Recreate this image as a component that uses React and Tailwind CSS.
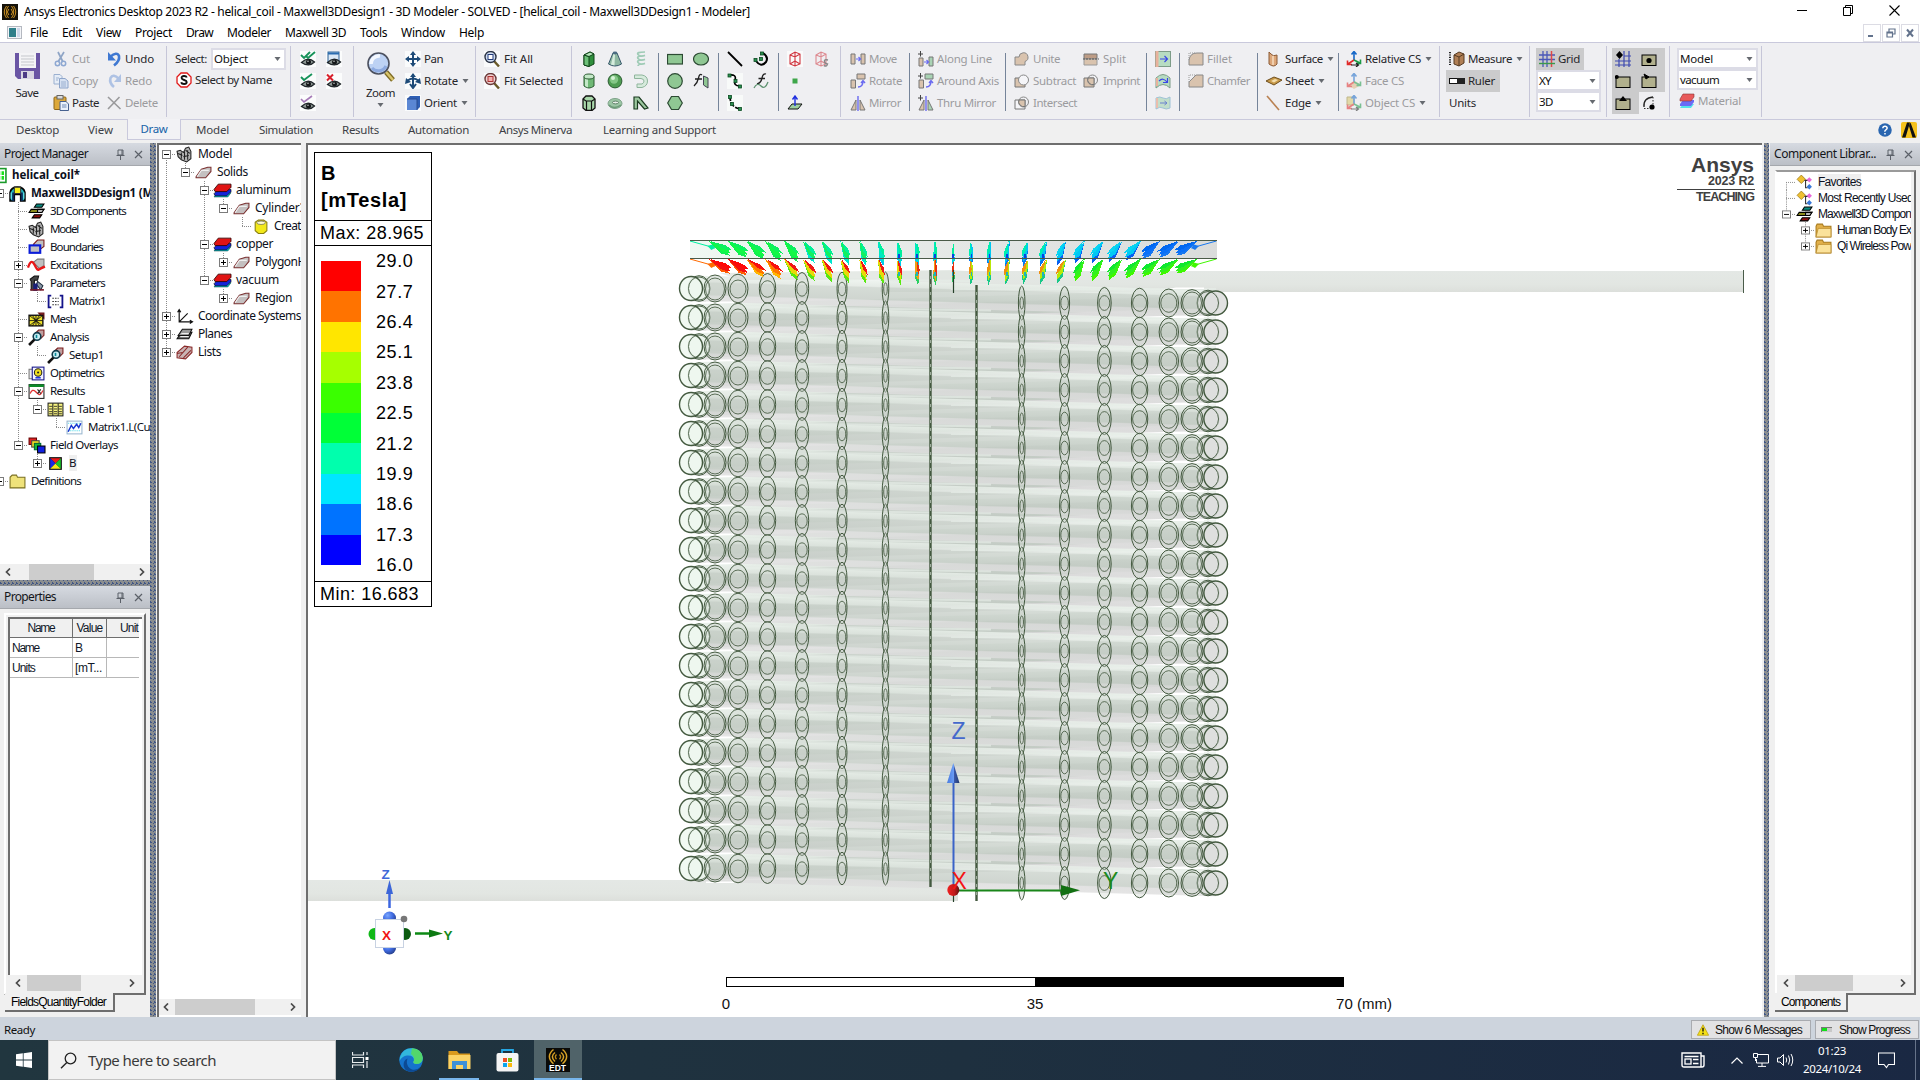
import React, { useLayoutEffect, useRef } from "react";

/* Text run whose tracking is tuned so that it fills a known width. */
function T({ w, c = "", children }) {
  const ref = useRef(null);
  useLayoutEffect(() => {
    const el = ref.current;
    if (!w || !el) return;
    el.style.letterSpacing = "0px";
    const n = el.textContent.length;
    el.style.letterSpacing = (w - el.getBoundingClientRect().width) / n + "px";
  }, [w]);
  return (
    <span ref={ref} className={"inline-block shrink-0 whitespace-pre " + c}>
      {children}
    </span>
  );
}

const I = ({ c = "h-4 w-4", o, children, v = "0 0 16 16" }) => (
  <svg viewBox={v} className={"block shrink-0 " + c} opacity={o} fill="none">
    {children}
  </svg>
);

/* ---------- ribbon icons ---------- */
const EyeShape = () => (
  <g>
    <path d="M1.500 11.500Q8 5 14.500 11Q9 16.500 1.500 11.500Z" fill="#8e9894" stroke="#20262a" strokeWidth="1.300" />
    <circle cx="8.500" cy="11" r="2.500" fill="#15181a" />
    <circle cx="8" cy="10.300" r="0.700" fill="#dfe5e2" />
  </g>
);
const Eye = ({ mark }) => (
  <I>
    <rect width="16" height="16" fill="#fbfcfc" />
    {mark === "win" && (
      <g>
        <rect x="2" y="1" width="11" height="11" fill="#dbe8f5" stroke="#2b5f94" />
        <path d="M2 2.500H13" stroke="#2b6cb0" strokeWidth="2" />
      </g>
    )}
    <EyeShape />
    {mark === "x" && <path d="M1 1.500L7 7.500M7 1.500L1 7.500" stroke="#d8202c" strokeWidth="2" />}
    {mark === "g" && <path d="M1 4L4 7L12 1" stroke="#17935a" strokeWidth="1.900" />}
    {mark === "gg" && <path d="M1 4L4 7L10 1M6 5L8 7L15 1" stroke="#17935a" strokeWidth="1.900" />}
    {mark === "p" && <path d="M1 4L4 7L12 1" stroke="#a67bb8" strokeWidth="1.700" />}
  </I>
);
const SaveIcon = () => (
  <I c="h-[28px] w-[27px]" v="0 0 27 28">
    <path d="M1 1H26V27H4L1 24Z" fill="#6a55a4" />
    <rect x="5" y="1" width="17" height="15" fill="#f4f4f6" />
    <path d="M7 4H20M7 7H20M7 10H20M7 13H20" stroke="#c5c7cc" />
    <rect x="7" y="19" width="13" height="8" fill="#d9d6e3" />
    <rect x="9" y="20" width="4" height="6" fill="#4c3a86" />
  </I>
);
const Cut = () => (
  <I>
    <path d="M5 1L10 11M11 1L5 11" stroke="#8fa5c6" strokeWidth="1.700" />
    <circle cx="4.500" cy="12.500" r="2.200" stroke="#8ea8d2" strokeWidth="1.500" />
    <circle cx="10.500" cy="12.500" r="2.200" stroke="#8ea8d2" strokeWidth="1.500" />
  </I>
);
const Copy = () => (
  <I>
    <path d="M1 1.500H7L9 3.500V11H1Z" fill="#e6edf7" stroke="#9bb0d0" />
    <path d="M6.500 5.500H12L15 8V15H6.500Z" fill="#d6e1f2" stroke="#8ea5ca" />
    <path d="M8 9H13M8 11H13M8 13H13M3 5H6M3 7H5" stroke="#9bb0d0" />
  </I>
);
const Paste = () => (
  <I>
    <rect x="1" y="2" width="12" height="12.500" rx="1" fill="#dca83a" stroke="#8c6418" />
    <rect x="4" y="0.500" width="6" height="3.500" fill="#dadada" stroke="#666" />
    <path d="M7 6.500H13L15.500 9V15.500H7Z" fill="#eaf1fb" stroke="#46618f" />
    <path d="M9 10H13.500M9 12H13.500" stroke="#6f8ab5" />
  </I>
);
const Undo = () => (
  <I>
    <path d="M3 6Q10 0 12 5Q13 10 7 14.500" stroke="#3f78d2" strokeWidth="2.600" />
    <path d="M1 1V9.500H9Z" fill="#3f78d2" />
  </I>
);
const Redo = () => (
  <I o={0.5}>
    <path d="M12 6Q6 0 3.500 5Q2 10 7 14" stroke="#6f97d8" strokeWidth="2.600" />
    <path d="M14 1V9H7Z" fill="#6f97d8" />
  </I>
);
const Del = () => (
  <I>
    <path d="M1 2L13.500 14M12.500 2L1 14" stroke="#9a9a9c" strokeWidth="1.600" />
  </I>
);
const SName = () => (
  <I>
    <path d="M5 1H11L15 5V11L11 15H5L1 11V5Z" fill="#fff" stroke="#e01818" strokeWidth="1.300" />
    <path d="M10.800 5.500C10 3.400 5.400 3.600 5.600 6C5.800 8.500 10.700 7.500 10.700 10C10.700 12.700 5.800 12.600 5.200 10.200" stroke="#111" strokeWidth="1.900" />
  </I>
);
const ZoomBig = () => (
  <I c="h-[31px] w-[30px]" v="0 0 30 31">
    <path d="M20 20L27 28" stroke="#7d6a22" strokeWidth="5" />
    <path d="M20 20L27 28" stroke="#d8c46c" strokeWidth="2.500" />
    <circle cx="12.500" cy="11.500" r="10.500" fill="#bdd2f4" stroke="#4c5160" strokeWidth="1.600" />
    <path d="M5 12A8 8 0 0 1 14 4" stroke="#f4f8ff" strokeWidth="3.500" />
    <path d="M6 16A8.500 8.500 0 0 0 20 14" stroke="#8daae0" strokeWidth="3" />
  </I>
);
const Pan = () => (
  <I>
    <rect width="16" height="16" fill="#fafbfc" />
    <path d="M8 0L11 4H9V7H12V5L16 8L12 11V9H9V12H11L8 16L5 12H7V9H4V11L0 8L4 5V7H7V4H5Z" fill="#1d4a78" />
  </I>
);
const Rot = () => (
  <I>
    <rect width="16" height="16" fill="#fafbfc" />
    <path d="M8 1V14M5 11L8 15L11 11M2 8Q8 3 14 8" stroke="#1d4a78" strokeWidth="2" />
    <path d="M0 11L1 5L6 9ZM16 11L15 5L10 9ZM5 4L8 0L11 4Z" fill="#1d4a78" />
  </I>
);
const Ori = () => (
  <I>
    <rect width="16" height="16" fill="#fafbfc" />
    <path d="M2 4L5 1H15V12L12 15H2Z" fill="#2f5fb4" />
    <rect x="2" y="4" width="10" height="11" fill="#5b87d4" />
    <path d="M2 4H12V15" stroke="#2a4d90" />
  </I>
);
const Fit = ({ r }) => (
  <I>
    <rect width="16" height="16" fill="#fafbfc" />
    <path d="M10 10L15 15.500" stroke="#6b5a2a" strokeWidth="2.400" />
    <circle cx="6.500" cy="6" r="5.500" fill={r ? "#f0d2d2" : "#cfdcf2"} stroke={r ? "#6a3a3a" : "#2c3446"} strokeWidth="1.400" />
    <rect x="4" y="3.500" width="5" height="5" fill={r ? "#f4b0b0" : "#fff"} stroke={r ? "#a33" : "#223a7a"} />
  </I>
);
const Box3 = () => (
  <I>
    <path d="M3 4L9 1L13 3V13L8 15.500L3 14Z" fill="#2f8f3c" stroke="#0e4217" />
    <path d="M3 4L8 5.500V15.500L3 14Z" fill="#6cc078" stroke="#0e4217" />
    <path d="M3 4L9 1L13 3L8 5.500Z" fill="#b6e6bb" stroke="#0e4217" />
  </I>
);
const Cyl = () => (
  <I>
    <path d="M3 3.500V13Q8 17 13 13V3.500Z" fill="#6fb876" stroke="#2c5c33" />
    <path d="M4 5V13L7 14.500V5Z" fill="#c4e8c8" />
    <ellipse cx="8" cy="3.500" rx="5" ry="2.500" fill="#c4e8c8" stroke="#2c5c33" />
  </I>
);
const Poly = () => (
  <I>
    <path d="M2 4L5 1H11L14 4V13L11 15.500H5L2 13Z" fill="#a9d8ab" stroke="#111" strokeWidth="1.300" />
    <path d="M2 4L5 6H11L14 4M5.500 6V15M10.500 6V15" stroke="#111" strokeWidth="1.200" />
  </I>
);
const Cone = () => (
  <I>
    <path d="M6 2L1.500 13Q8 17 14.500 13L10 2Z" fill="#8fb8a2" stroke="#37586b" />
    <path d="M6.500 3L4 13.500L7.500 14.500L8 3Z" fill="#d6ecdd" />
    <ellipse cx="8" cy="2" rx="2.300" ry="1.400" fill="#4b6b82" />
  </I>
);
const Sphere = () => (
  <I>
    <circle cx="8" cy="8" r="6.900" fill="#4f9c52" stroke="#2c5c33" />
    <circle cx="7" cy="6.500" r="4.200" fill="#84c686" />
    <circle cx="6" cy="5" r="2" fill="#d5f2d6" />
  </I>
);
const Torus = () => (
  <I>
    <ellipse cx="8" cy="8.500" rx="7" ry="5" fill="#9cc6a5" stroke="#7fa38a" />
    <ellipse cx="8.500" cy="7.500" rx="3" ry="1.400" fill="#e8efe9" stroke="#5f8068" />
    <path d="M2 10Q7 15 14 10" stroke="#6d9a78" strokeWidth="1.500" />
  </I>
);
const Helix = () => (
  <I>
    <path d="M12 1Q3 1 5 3.500T12 4.500Q3 5 5 7.500T12 8.500Q3 9 5 11.500T12 12.500Q5 13 5 15" stroke="#9fcbb6" strokeWidth="1.700" />
  </I>
);
const Spiral = () => (
  <I>
    <path d="M1.500 2H9Q14.500 3 14.500 8T9 14.500H4V11H9Q11 10 11 8T8 5.500H1.500Z" fill="#d6eadc" stroke="#8fb59c" />
  </I>
);
const Bend = () => (
  <I>
    <path d="M1 14V2H6L15 13L11.500 14L4.500 6V14Z" fill="#9cc79f" stroke="#1a3a20" strokeWidth="1.200" />
  </I>
);
const G = "#8fc793";
const Line2 = () => <I><path d="M1 1L15 15" stroke="#000" strokeWidth="1.800" /></I>;
const Dots = ({ p }) => p.map(([x, y], i) => <rect key={i} x={x - 1.5} y={y - 1.5} width="3" height="3" fill="#2a8f4f" stroke="#0c4a22" strokeWidth="0.800" />);
const Spl = () => <I><rect width="16" height="16" fill="#f8faf9" /><path d="M2 2Q10 1 8 7T13 13" stroke="#000" strokeWidth="1.600" /><Dots p={[[2.5, 2.5], [8.500, 8], [13, 13.500]]} /></I>;
const Arc1 = () => <I><rect width="16" height="16" fill="#f8faf9" /><path d="M3 1Q3 13 14 14" stroke="#000" strokeWidth="1.800" strokeDasharray="5 1.500" /><Dots p={[[3, 2], [5, 9], [13, 14]]} /></I>;
const Arc2 = () => <I><path d="M10 2Q16 6 13 11Q8 17 3 10" stroke="#000" strokeWidth="2" /><Dots p={[[9, 2.500], [8, 8], [2.500, 9]]} /></I>;
const Fx = () => <I><path d="M13 1Q10 0 9 5T4 11M5.500 5.500H12" stroke="#222" strokeWidth="1.300" /><path d="M1 15Q4 9 8 13T15 9" stroke="#5d9270" strokeWidth="1.300" /></I>;
const Surf = () => <I><path d="M9 2Q6.500 0 5.500 5T1 13M2 6H9" stroke="#222" strokeWidth="1.300" /><path d="M10.500 3L15 5V15L10.500 12Z" fill={G} stroke="#445" /></I>;
const Cage = ({ s }) => (
  <I>
    <rect width="16" height="16" fill="#fafafa" opacity={s ? 0 : 1} />
    <g opacity={s ? 0.55 : 1}>
      <path d="M3 4L8 1L13 3V13L8 15L3 13ZM3 4L8 6L13 3M8 6V15M8 1V10L3 13M8 10L13 13" stroke="#d0353f" strokeWidth="1.100" />
      {s && <path d="M15 9Q11 8 11.500 10.500T14.500 13Q14 16 11 14.500" stroke="#333" strokeWidth="1.400" />}
    </g>
  </I>
);
const Plane = () => <I><path d="M1 14L5 9H15L11 14Z" fill="#9fd0a0" stroke="#111" /><path d="M8 11V2M5.500 4.500L8 1L10.500 4.500" stroke="#1f2fe0" strokeWidth="1.400" /></I>;
const TAN = "#d9c3ae";
const Move = () => <I><path d="M1 3H5V13H1ZM11 3H15V13H11Z" fill={TAN} stroke="#777" /><path d="M6 8H10M8.500 6L10.500 8L8.500 10" stroke="#6a6af0" strokeWidth="1.200" /></I>;
const RotG = ({ plus }) => <I><path d="M1 7H5.500V15H1Z" fill={TAN} stroke="#777" /><path d="M7 1H15V6H7Z" fill={plus ? "#a9d3b4" : TAN} stroke="#777" /><path d="M8 14Q13 14 13 8M11 10L13 7.500L15 10" stroke="#6a6af0" strokeWidth="1.400" />{plus && <path d="M0 3H5M2.500 0V5.500" stroke="#444" />}</I>;
const Mir = ({ plus }) => <I><path d="M1 15L6 5V15Z" fill={TAN} stroke="#777" /><path d="M15 15L10 5V15Z" fill={plus ? "#a9d3b4" : TAN} stroke="#777" /><path d="M8 1V16" stroke="#6a6af0" strokeWidth="1.400" />{plus && <path d="M0 3H5M2.500 0V5.500" stroke="#444" />}</I>;
const Along = () => <I><path d="M1 7H5V15H1Z" fill={TAN} stroke="#777" /><path d="M11 6H15V15H11Z" fill="#a9d3b4" stroke="#777" /><path d="M6 11H10M8.500 9L10.500 11L8.500 13" stroke="#6a6af0" strokeWidth="1.200" /><path d="M0 3H5M2.500 0V5.500" stroke="#444" /></I>;
const Unite = () => <I><path d="M1 14V6H5A4.500 4.500 0 1 1 11 10.500V14Z" fill={TAN} stroke="#888" /></I>;
const Subt = () => <I><path d="M1 14V5H11V14Z" fill={TAN} stroke="#777" /><circle cx="9.500" cy="7" r="5" fill="#f5f5f8" stroke="#888" /></I>;
const Inter = ({ f }) => <I><path d="M1 14V5H11V14Z" fill={f ? TAN : "#f5f5f8"} stroke="#777" /><circle cx="9.500" cy="7" r="5" stroke="#888" /><path d="M5 5H11V11.500A5 5 0 0 1 5 5Z" fill={TAN} stroke="#777" /></I>;
const Split = () => <I><path d="M1 3H14V8H1Z" fill="#bd9c86" stroke="#777" /><path d="M1 8H14V14H1Z" fill="#d9c3ae" stroke="#999" /><path d="M0 8H16" stroke="#555" strokeDasharray="2 1" /></I>;
const SwA = () => <I><rect x="0.500" y="0.500" width="15" height="15" fill="#b7dcc2" stroke="#7d9c88" /><path d="M2 0V16" stroke="#e8b19c" strokeWidth="3" /><path d="M5 8H12M9.500 5L12.500 8L9.500 11" stroke="#3946e8" strokeWidth="1.200" /></I>;
const SwB = () => <I><path d="M1 15V5Q8 -2 15 5V15Q8 8 1 15Z" fill="#b7dcc2" stroke="#7d9c88" /><path d="M4 8Q8 4 12 9M12.500 5V9.500H8" stroke="#3946e8" strokeWidth="1.200" /><path d="M2 5V13" stroke="#e8b19c" strokeWidth="2" /></I>;
const SwC = () => <I o={0.8}><path d="M1 3Q5 1 8 3T15 2V13Q11 15 8 13T1 14Z" fill="#b7dcc2" stroke="#8cb8d0" /><path d="M5 8H12M9.500 6L12 8L9.500 10" stroke="#4a66c8" /><path d="M2 3V13" stroke="#e8b19c" strokeWidth="2" /></I>;
const Fil = ({ k }) => <I><path d={k ? "M1 14V9L8 2H15V14Z" : "M1 14V9Q2 2 9 2H15V14Z"} fill={TAN} stroke="#888" /><path d="M1 9V2H8" stroke="#999" strokeDasharray="1 1" /></I>;
const SurfI = () => <I><path d="M3 1V13Q8 17 11 13V4Q7 6 5 3Z" fill="#dca679" stroke="#8a5a36" /><path d="M7 5V14" stroke="#f0cfae" strokeWidth="2" /></I>;
const SheetI = () => <I><path d="M0 8L8 4L16 7L8 12Z" fill="#c89a4a" stroke="#6d4d1d" /><path d="M5 8L9 6L12 7L8 9.500Z" fill="#f3ddac" /></I>;
const EdgeI = () => <I><path d="M1 1L13 15" stroke="#b98152" strokeWidth="1.600" /></I>;
const Csi = ({ k }) => (
  <I o={k ? 0.55 : 1}>
    {k === "f" && <path d="M2 12L9 8L15 12L8 16Z" fill="#e0b583" />}
    {k === "o" && <path d="M1 2H8V10H1Z" fill="#d8c66a" stroke="#9a8a3a" />}
    <path d="M8 9V1M5.500 3.500L8 0.500L10.500 3.500" stroke="#1668c8" strokeWidth="1.600" />
    <path d="M8 9L2 13M1.500 9.500V13.500H6" stroke="#e02a2a" strokeWidth="1.600" />
    <path d="M8 9L14 12M14.500 8.500V12.500H10.500" stroke="#1c9a46" strokeWidth="1.600" />
    {k !== "f" && <path d="M5 14H12M10 12L12.500 14L10 16" stroke="#222" strokeWidth="1.200" />}
  </I>
);
const Meas = () => <I><path d="M1 1V14" stroke="#222" strokeWidth="2" strokeDasharray="1.200 1.200" /><path d="M5 4L10 1L15 3V12L10 15L5 13Z" fill="#b07f55" stroke="#553a22" /><path d="M5 4L10 6L15 3M10 6V15" stroke="#553a22" /></I>;
const Rul = () => <I><rect x="0.500" y="5.500" width="15" height="5" fill="#fff" stroke="#111" /><rect x="8" y="5" width="8" height="6" fill="#222" /></I>;
const GridI = () => <I><path d="M4 0V16M0 4H16M0 8.500H16" stroke="#4a58b8" strokeWidth="1.300" /><path d="M8 0V16" stroke="#4a58b8" strokeWidth="1.300" /><path d="M12.500 0V16" stroke="#e04848" strokeWidth="1.500" /><path d="M0 12.500H16" stroke="#3a9a4a" strokeWidth="1.400" /></I>;
const Snap = ({ k }) => (
  <I>
    {k === 0 ? (
      <g><path d="M4 8V16M9 0V16M14 0V16M0 10H16M0 14H16M9 5H16" stroke="#3e4ab0" strokeWidth="1.200" /><path d="M4.500 0L8 4L4.500 8L1 4Z" fill="#000" /></g>
    ) : k === 5 ? (
      <g><path d="M11 2Q1 3 2 12" stroke="#222" strokeWidth="1.300" /><path d="M11 2V12M2 13.500H8" stroke="#333" strokeDasharray="1.500 1.500" /><circle cx="10" cy="12" r="2.600" fill="#000" /></g>
    ) : (
      <g>
        <rect x="1" y="4" width="14" height="10.500" fill="#b1b08d" stroke="#000" />
        {k === 1 && <circle cx="8" cy="9.500" r="2.600" fill="#000" />}
        {k === 2 && <circle cx="1.800" cy="4" r="2" fill="#000" />}
        {k === 3 && <path d="M3 1L8 4L5 6Z" fill="#000" stroke="#000" />}
        {k === 4 && <path d="M8 1L12 6H4Z" fill="#000" />}
      </g>
    )}
  </I>
);
const Mat = () => <I><path d="M1 15L4 11H15L12 15Z" fill="#53e2ea" /><path d="M1 11L4 7H15V9L12 13H1Z" fill="#6a6af6" /><path d="M1 6L4 1H15V4L12 8H1Z" fill="#e85a5a" stroke="#833" strokeWidth="0.600" /></I>;

const Caret = ({ c = "" }) => <I v="0 0 7 4" c={"h-[4px] w-[7px] " + c}><path d="M0.500 0H6.500L3.500 4Z" fill="#666a70" /></I>;

/* ---------- ribbon layout ---------- */
const Col = ({ c, children }) => <div className={"flex shrink-0 flex-col " + c}>{children}</div>;
const Row = ({ icon, t, w, dim, arrow, c = "", gap = "w-[19px]" }) => (
  <div className={"flex h-[22px] items-center " + c}>
    {icon && <span className={"shrink-0 " + gap}>{icon}</span>}
    {t && <T w={w} c={dim ? "text-[#9b9b9e]" : "text-[#26262a]"}>{t}</T>}
    {arrow && <Caret c="ml-[4px]" />}
  </div>
);
const Sep = () => <div className="-mt-[2px] h-[71px] w-px shrink-0 bg-[#c6c6d8]" />;
const SepD = () => <div className="mt-[5px] h-[58px] w-px shrink-0 bg-[#75849a]" />;
const Drop = ({ t, w, c }) => (
  <div className={"flex items-center justify-between border-2 border-[#dcdce6] bg-white pl-[1px] pr-[3px] " + c}>
    <T w={w} c="text-[#111]">{t}</T>
    <Caret />
  </div>
);
const Ic = ({ c = "", children }) => <div className={"flex h-[22px] items-center " + c}>{children}</div>;

function Ribbon() {
  return (
    <div className="flex h-[78px] overflow-hidden border-y border-[#c9c9dc] bg-[#efeff2] pt-[5px] text-[11.500px]">
      <Col c="w-[52px] items-center pl-[2px] pt-[4px]">
        <SaveIcon />
        <T w={23} c="mt-[5px] text-[#26262a]">Save</T>
      </Col>
      <Col c="w-[54px] pl-px">
        <Row icon={<Cut />} t="Cut" w={18} dim />
        <Row icon={<Copy />} t="Copy" w={26} dim />
        <Row icon={<Paste />} t="Paste" w={27} />
      </Col>
      <Col c="w-[60px] pl-px">
        <Row icon={<Undo />} t="Undo" w={29} gap="w-[18px]" />
        <Row icon={<Redo />} t="Redo" w={27} dim gap="w-[18px]" />
        <Row icon={<Del />} t="Delete" w={33} dim gap="w-[18px]" />
      </Col>
      <Sep />
      <Col c="w-[123px] pl-[8px]">
        <div className="flex h-[22px] items-center">
          <T w={32} c="mr-[4px] text-[#26262a]">Select:</T>
          <Drop t="Object" w={34} c="h-[22px] w-[75px]" />
        </div>
        <Row icon={<SName />} t="Select by Name" w={77} gap="w-[19px]" c="-mt-px pl-px" />
      </Col>
      <Sep />
      <Col c="w-[62px] pl-[9px]">
        <Ic c="gap-[10px]"><Eye mark="gg" /><Eye mark="win" /></Ic>
        <Ic c="gap-[10px]"><Eye mark="g" /><Eye mark="x" /></Ic>
        <Ic><Eye mark="p" /></Ic>
      </Col>
      <Sep />
      <Col c="w-[51px] items-center pl-[2px] pt-[4px]">
        <ZoomBig />
        <T w={29} c="mt-[2px] text-[#26262a]">Zoom</T>
        <Caret c="mt-[2px]" />
      </Col>
      <Col c="w-[70px]">
        <Row icon={<Pan />} t="Pan" w={19} />
        <Row icon={<Rot />} t="Rotate" w={34} arrow />
        <Row icon={<Ori />} t="Orient" w={33} arrow />
      </Col>
      <Sep />
      <Col c="w-[95px] pl-[8px]">
        <Row icon={<Fit />} t="Fit All" w={29} gap="w-[20px]" />
        <Row icon={<Fit r />} t="Fit Selected" w={59} gap="w-[20px]" />
      </Col>
      <Sep />
      <Col c="w-[86px] pl-[9px]">
        <Ic c="gap-[10px]"><Box3 /><Cone /><Helix /></Ic>
        <Ic c="gap-[10px]"><Cyl /><Sphere /><Spiral /></Ic>
        <Ic c="gap-[10px]"><Poly /><Torus /><Bend /></Ic>
      </Col>
      <SepD />
      <Col c="w-[59px] pl-[8px]">
        <Ic c="gap-[10px]"><I><rect x="0.500" y="3.500" width="15" height="9.500" fill={G} stroke="#2c4a33" strokeWidth="1.200" /></I><I><ellipse cx="8" cy="8" rx="7.500" ry="6" fill={G} stroke="#2c4a33" strokeWidth="1.200" /></I></Ic>
        <Ic c="gap-[10px]"><I><circle cx="8" cy="8" r="7.300" fill={G} stroke="#2c4a33" strokeWidth="1.200" /></I><Surf /></Ic>
        <Ic><I><path d="M4.500 1.500H11.500L15.300 8L11.500 14.500H4.500L0.700 8Z" fill={G} stroke="#2c4a33" strokeWidth="1.200" /></I></Ic>
      </Col>
      <SepD />
      <Col c="w-[59px] pl-[8px]">
        <Ic c="gap-[10px]"><Line2 /><Arc2 /></Ic>
        <Ic c="gap-[10px]"><Spl /><Fx /></Ic>
        <Ic><Arc1 /></Ic>
      </Col>
      <SepD />
      <Col c="w-[61px] pl-[8px]">
        <Ic c="gap-[10px]"><Cage /><Cage s /></Ic>
        <Ic><I><rect x="5.500" y="5.500" width="5" height="5" fill="#3ea64a" /></I></Ic>
        <Ic><Plane /></Ic>
      </Col>
      <Sep />
      <Col c="w-[68px] pl-[9px]">
        <Row icon={<Move />} t="Move" w={28} dim />
        <Row icon={<RotG />} t="Rotate" w={33} dim />
        <Row icon={<Mir />} t="Mirror" w={32} dim />
      </Col>
      <SepD />
      <Col c="w-[95px] pl-[8px]">
        <Row icon={<Along />} t="Along Line" w={55} dim />
        <Row icon={<RotG plus />} t="Around Axis" w={62} dim />
        <Row icon={<Mir plus />} t="Thru Mirror" w={59} dim />
      </Col>
      <SepD />
      <Col c="w-[77px] pl-[8px]">
        <Row icon={<Unite />} t="Unite" w={27} dim />
        <Row icon={<Subt />} t="Subtract" w={43} dim />
        <Row icon={<Inter />} t="Intersect" w={44} dim />
      </Col>
      <Col c="w-[63px]">
        <Row icon={<Split />} t="Split" w={23} dim gap="w-[20px]" />
        <Row icon={<Inter f />} t="Imprint" w={37} dim gap="w-[20px]" />
      </Col>
      <SepD />
      <Col c="w-[32px] items-center">
        <Ic><SwA /></Ic>
        <Ic><SwB /></Ic>
        <Ic><SwC /></Ic>
      </Col>
      <SepD />
      <Col c="w-[77px] pl-[8px]">
        <Row icon={<Fil />} t="Fillet" w={25} dim />
        <Row icon={<Fil k />} t="Chamfer" w={43} dim />
      </Col>
      <SepD />
      <Col c="w-[80px] pl-[8px]">
        <Row icon={<SurfI />} t="Surface" w={38} arrow />
        <Row icon={<SheetI />} t="Sheet" w={29} arrow />
        <Row icon={<EdgeI />} t="Edge" w={26} arrow />
      </Col>
      <SepD />
      <Col c="w-[100px] pl-[7px]">
        <Row icon={<Csi />} t="Relative CS" w={56} arrow />
        <Row icon={<Csi k="f" />} t="Face CS" w={39} dim />
        <Row icon={<Csi k="o" />} t="Object CS" w={50} dim arrow />
      </Col>
      <Sep />
      <Col c="w-[89px] pl-[6px]">
        <Row icon={<Meas />} t="Measure" w={44} arrow c="pl-[3px]" />
        <div className="flex h-[22px] w-[54px] items-center bg-[#cbcbcc] pl-[3px]">
          <span className="w-[19px]"><Rul /></span>
          <T w={27} c="text-[#26262a]">Ruler</T>
        </div>
        <Row t="Units" w={27} c="pl-[3px]" />
      </Col>
      <Sep />
      <Col c="w-[76px] pl-[6px]">
        <div className="flex h-[22px] w-[48px] items-center bg-[#cbcbcc] pl-[3px]">
          <span className="w-[19px]"><GridI /></span>
          <T w={22} c="text-[#26262a]">Grid</T>
        </div>
        <Drop t="XY" w={12} c="h-[21px] w-[65px]" />
        <Drop t="3D" w={14} c="h-[21px] w-[65px]" />
      </Col>
      <Sep />
      <Col c="w-[62px] pl-[5px]">
        <div className="flex h-[22px] w-[53px] items-center gap-[10px] bg-[#cbcbcc] pl-[3px]"><Snap k={0} /><Snap k={1} /></div>
        <div className="flex h-[22px] w-[53px] items-center gap-[10px] bg-[#cbcbcc] pl-[3px]"><Snap k={2} /><Snap k={3} /></div>
        <div className="flex h-[22px] w-[53px] items-center">
          <div className="flex h-[22px] w-[27px] items-center bg-[#cbcbcc] pl-[3px]"><Snap k={4} /></div>
          <span className="pl-[3px]"><Snap k={5} /></span>
        </div>
      </Col>
      <Sep />
      <Col c="w-[91px] pl-[7px]">
        <Drop t="Model" w={33} c="h-[21px] w-[81px]" />
        <Drop t="vacuum" w={39} c="h-[21px] w-[81px]" />
        <Row icon={<Mat />} t="Material" w={43} dim c="pl-[2px]" />
      </Col>
      <Sep />
    </div>
  );
}

/* ---------- panels ---------- */
const SPLIT = "bg-[#8a8d8f] bg-[linear-gradient(45deg,#3f5686_25%,transparent_25%,transparent_75%,#3f5686_75%)] bg-[length:4px_4px]";
const SplitV = ({ c = "w-[6px]" }) => <div className={"shrink-0 " + c + " " + SPLIT} />;

const PanelHead = ({ t, w }) => (
  <div className="flex h-[23px] shrink-0 items-center border-b border-[#a5a8ad] bg-gradient-to-b from-[#d6dae1] to-[#bbbfc6] pl-[4px] pr-[7px] text-[12px] text-[#14161a]">
    <T w={w}>{t}</T>
    <I c="ml-auto h-[11px] w-[9px]" v="0 0 9 11"><path d="M2 1H7V6H2ZM0.500 6.500H8.500M4.500 7V11M6 1V6" stroke="#5b6068" /></I>
    <I c="ml-[9px] h-[9px] w-[9px]" v="0 0 9 9"><path d="M1 1L8 8M8 1L1 8" stroke="#5b6068" strokeWidth="1.200" /></I>
  </div>
);

const HScroll = ({ pre, thumb, c = "" }) => (
  <div className={"flex h-[16px] shrink-0 items-center bg-[#f0f0f0] " + c}>
    <I c={"h-[8px] " + pre} v="0 0 6 8"><path d="M5 0.500L1.500 4L5 7.500" stroke="#4a4a4a" strokeWidth="1.700" /></I>
    <div className={"h-full bg-[#cdcdcd] " + thumb} />
    <I c="ml-auto mr-[5px] h-[8px] w-[6px]" v="0 0 6 8"><path d="M1 0.500L4.500 4L1 7.500" stroke="#4a4a4a" strokeWidth="1.700" /></I>
  </div>
);

/* tree icons, drawn on a 16 x 14 field */
const TI = ({ k }) => {
  const g = {
    proj: <g><rect x="2" y="0.500" width="13" height="13" fill="#fff" stroke="#1a9a2a" strokeWidth="1.500" /><path d="M8.500 3V11M12 3V11" stroke="#18e018" strokeWidth="2.300" strokeDasharray="3.500 1" /></g>,
    max: <g><path d="M1 14V6Q2 1 8 1T15 6V14H11V8H5V14Z" fill="#1fb9c4" stroke="#000" strokeWidth="1.500" /><path d="M5 1H11V7H5Z" fill="#f4ee1a" stroke="#333" /><path d="M4 6V14M12 6V14" stroke="#0a2c5a" strokeWidth="2" /><path d="M2 6V12M14 6V12" stroke="#7af0f4" /></g>,
    comp: <g><path d="M6 3L8 0H15L13 3Z" fill="#0a8a80" stroke="#000" /><path d="M1 8L3 5H9V8ZM9 8V5H15L13 8Z" fill="#8a8a1a" stroke="#000" /><path d="M9 5H15L13 8H9Z" fill="#bbb" stroke="#000" /><path d="M4 13L6 10H13L11 13Z" fill="#8a1010" stroke="#000" /></g>,
    model: <g><path d="M1 4L4 3L7 5L9 1L12 0L14 4V11L10 14L5 12L2 9Z" fill="#b4b4b4" stroke="#222" /><path d="M5 5V11M8 4V12M11 3V12M2 6L6 8M9 3L13 6M7 9L12 8" stroke="#222" /></g>,
    bound: <g><path d="M5 4L9 0H15V6L11 9Z" fill="#c0c0c0" stroke="#7a1a1a" /><rect x="1.500" y="5" width="10" height="7" fill="#c0c0c0" stroke="#0a1cd8" strokeWidth="2" /></g>,
    exc: <g><path d="M5 4L9 1H15V7L11 10Z" fill="#c0c0c0" stroke="#777" /><path d="M0 9Q3 0 6 6T10 11T16 8" stroke="#e81818" strokeWidth="2.200" /></g>,
    par: <g><path d="M2 3L6 0H10L9 4H6V13H3V5Z" fill="#444" stroke="#111" /><path d="M9 5L14 9L12 13L8 8Z" fill="#8a98a8" stroke="#1c2a3a" /><rect x="5" y="7" width="4" height="7" fill="#1a1f7a" /><path d="M2 13H15" stroke="#7a1a2a" strokeWidth="1.500" /></g>,
    mtx: <g><path d="M4 1.500H1.500V12.500H4M12 1.500H14.500V12.500H12" stroke="#14148a" strokeWidth="1.700" /><path d="M5 4H11M5 7H11M5 10H11" stroke="#333" strokeDasharray="1.500 1" /></g>,
    mesh: <g><path d="M10 1H15V6Z" fill="#b02020" stroke="#611" /><rect x="1" y="3" width="13" height="10" fill="#efe22a" stroke="#111" strokeWidth="1.300" /><path d="M1 3L14 13M1 13L14 3M7.500 3V13M1 8H14M4 3L11 13M11 3L4 13" stroke="#111" strokeWidth="0.800" /></g>,
    ana: <g><path d="M7 3L10 0H15V5L12 8Z" fill="#c0a0a0" stroke="#7a1a1a" /><circle cx="8.500" cy="6" r="3.600" fill="#c8eef4" stroke="#0f3a4a" strokeWidth="1.500" /><path d="M6 9L1 14" stroke="#111" strokeWidth="2.500" /><path d="M8 4.500V7.500" stroke="#0a8a9a" strokeWidth="1.500" /></g>,
    opt: <g><path d="M1 3H7V12H1Z" fill="#eee" stroke="#777" /><rect x="4" y="1" width="11" height="12" fill="#f4f4ff" stroke="#14148a" /><circle cx="9.500" cy="6" r="3.500" fill="#f0e020" stroke="#222" /><circle cx="9.500" cy="6" r="1" fill="#222" /><path d="M7 11H12" stroke="#2038e0" strokeWidth="1.500" /></g>,
    res: <g><rect x="1" y="0.500" width="14" height="13" fill="#fff" stroke="#222" /><path d="M1 1.500H15" stroke="#0c8a2a" strokeWidth="2.500" /><path d="M2 9Q4 4 7 7T11 10T14 6" stroke="#e03030" strokeWidth="1.200" /><path d="M9 5L12 9M12 5L9 9" stroke="#222" /></g>,
    tab: <g><rect x="1" y="1" width="14" height="12" fill="#f8f480" stroke="#222" /><path d="M5.500 1V13M10.500 1V13" stroke="#222" /><path d="M2 4H14M2 6.500H14M2 9H14M2 11H14" stroke="#222" strokeDasharray="3 1.500" strokeWidth="0.800" /></g>,
    plot: <g><rect x="1" y="1" width="14" height="12" fill="#fff" stroke="#9ab8d0" /><path d="M2 3H14M2 10H14" stroke="#48d8e8" strokeDasharray="1 1" /><path d="M2 11L5 5L7 8L10 4L12 7L14 3" stroke="#1838d0" strokeWidth="1.400" /></g>,
    fo: <g><rect x="1" y="0" width="7" height="6" fill="#e02020" stroke="#600" /><rect x="3.500" y="2.500" width="7" height="6" fill="#f4e020" stroke="#444" /><rect x="6" y="5" width="6" height="6" fill="#12b83a" stroke="#063" /><rect x="9" y="7.500" width="7" height="6.500" fill="#1020e0" stroke="#000" /></g>,
    b: <g><rect x="2" y="1" width="12" height="12" fill="#111" /><path d="M3 2H13L8 7Z" fill="#f01818" /><path d="M3 2L8 7L3 12Z" fill="#1828e8" /><path d="M3 12L8 7L13 12Z" fill="#f4e818" /><path d="M13 2L8 7L13 12Z" fill="#18c828" /></g>,
    fold: <g><path d="M1 3L3 1H7L8 3H15V13H1Z" fill="#efe27a" stroke="#7a6f20" /></g>,
    fold2: <g><path d="M1 3L2 1H7L8 3H15V13H1Z" fill="#e2b04a" stroke="#a87a1a" /><path d="M1 13L3 5H15V13Z" fill="#fbe29a" stroke="#b8892a" strokeWidth="0.700" /></g>,
    sol: <g><path d="M1 11L6 4L12 2H15V6L10 12H1Z" fill="#c4c0c0" stroke="#7a3030" /><path d="M2 11L6 5L13 5" stroke="#eee" /></g>,
    mat: <g><path d="M0 13L4 9H16L13 13Z" fill="#12d8e8" stroke="#044" strokeWidth="0.600" /><path d="M0 10L4 6H16V8L12 12H1Z" fill="#1424d8" stroke="#000" strokeWidth="0.600" /><path d="M0 6L4 1H16V4L12 8H1Z" fill="#e01414" stroke="#300" strokeWidth="0.800" /></g>,
    cyl: <g><path d="M3 3L6 1H11L14 3V11L11 13.500H6L3 11Z" fill="#f2e81a" stroke="#8a7f10" /><ellipse cx="8.500" cy="3.500" rx="4" ry="1.600" fill="#fffbd0" stroke="#555" strokeWidth="0.600" /></g>,
    cs: <g><path d="M3 1V12H15M1.500 3L3 0.500L4.500 3M13 10.500L15.500 12L13 13.500M3 12L11 4" stroke="#111" strokeWidth="1.100" /></g>,
    pl: <g><path d="M1 11L5 5H15L12 11Z" fill="#555" stroke="#111" /><path d="M2 8L6 2H15L12 8Z" fill="#999" stroke="#111" /><path d="M5 6H12M4 9H12" stroke="#eee" /></g>,
    li: <g><path d="M1 12V7L8 1L15 2V7L9 13Z" fill="#c9b4b4" stroke="#8a2a2a" /><path d="M3 11L11 2M7 12L14 5M1 8L6 7" stroke="#8a2a2a" /></g>,
    fav: <g><path d="M5 0L9 4L5 8L1 4Z" fill="#f0c030" stroke="#9a7818" strokeWidth="0.700" /><path d="M8 5H12M9 5V12H11" stroke="#333" /><path d="M12.500 2L15 4.500L12.500 7L10 4.500Z" fill="#e868d8" /><path d="M12.500 8.500L15 11L12.500 13.500L10 11Z" fill="#3878d8" /></g>,
  };
  return <svg viewBox="0 0 16 14" className="block h-[15px] w-[17px] shrink-0 overflow-visible" fill="none">{g[k]}</svg>;
};

/* guides: one letter per 19px cell. "|" line, " " blank, "t" tee, "l" corner, "+"/"-" toggles */
const Cell = ({ k, last, first }) => (
  <svg viewBox="0 0 19 18" className="block h-full w-[19px] shrink-0" preserveAspectRatio="none" fill="none">
    {(k === "|" || k === "t" || ((k === "+" || k === "-") && !last)) && <path d={first ? "M9.500 9V18" : "M9.500 0V18"} stroke="#8a8a8a" strokeDasharray="1 1" />}
    {(k === "l" || ((k === "+" || k === "-") && last)) && <path d="M9.500 0V9" stroke="#8a8a8a" strokeDasharray="1 1" />}
    {"tl+-".includes(k) && <path d="M9 9.500H19" stroke="#8a8a8a" strokeDasharray="1 1" />}
    {(k === "+" || k === "-") && <rect x="5.500" y="5.500" width="8" height="8" fill="#fff" stroke="#7b7b7b" />}
    {(k === "+" || k === "-") && <path d={k === "+" ? "M7 9.500H12M9.500 7V12" : "M7 9.500H12"} stroke="#000" />}
  </svg>
);
const TreeRow = ({ g, k, t, w, b, last, first, hl, h = "h-[18px]" }) => (
  <div className={"flex items-center " + h}>
    {g.split("").map((x, i) => <Cell key={i} k={x} last={last} first={first} />)}
    <span className="w-[22px] shrink-0"><TI k={k} /></span>
    <T w={w} c={(b ? "font-bold " : "") + (hl ? "bg-[#efefef]" : "")}>{t}</T>
  </div>
);

const PROJECT = [
  { g: "", k: "proj", t: "helical_coil*", w: 68, b: 1 },
  { g: "-", k: "max", t: "Maxwell3DDesign1 (M", w: 122, b: 1 },
  { g: "|t", k: "comp", t: "3D Components", w: 76 },
  { g: "|t", k: "model", t: "Model", w: 28 },
  { g: "|t", k: "bound", t: "Boundaries", w: 53 },
  { g: "|+", k: "exc", t: "Excitations", w: 52 },
  { g: "|-", k: "par", t: "Parameters", w: 55 },
  { g: "||l", k: "mtx", t: "Matrix1", w: 37 },
  { g: "|t", k: "mesh", t: "Mesh", w: 26 },
  { g: "|-", k: "ana", t: "Analysis", w: 39 },
  { g: "||l", k: "ana", t: "Setup1", w: 35 },
  { g: "|t", k: "opt", t: "Optimetrics", w: 54 },
  { g: "|-", k: "res", t: "Results", w: 35 },
  { g: "||-", k: "tab", t: "L Table 1", w: 44, last: 1 },
  { g: "|| l", k: "plot", t: "Matrix1.L(Cu", w: 62 },
  { g: "|-", k: "fo", t: "Field Overlays", w: 68, last: 1 },
  { g: "| +", k: "b", t: "B", w: 8, hl: 1, last: 1 },
  { g: "+", k: "fold", t: "Definitions", w: 50, last: 1 },
];
const MODEL = [
  { g: "-", k: "model", t: "Model", w: 34, first: 1 },
  { g: "|-", k: "sol", t: "Solids", w: 31, last: 1 },
  { g: "| -", k: "mat", t: "aluminum", w: 55 },
  { g: "| |-", k: "sol", t: "Cylinder3", w: 51, last: 1 },
  { g: "| | l", k: "cyl", t: "Creat", w: 27 },
  { g: "| -", k: "mat", t: "copper", w: 37 },
  { g: "| |+", k: "sol", t: "PolygonH", w: 51, last: 1 },
  { g: "| -", k: "mat", t: "vacuum", w: 43, last: 1 },
  { g: "|  +", k: "sol", t: "Region", w: 37, last: 1 },
  { g: "+", k: "cs", t: "Coordinate Systems", w: 103 },
  { g: "+", k: "pl", t: "Planes", w: 34 },
  { g: "+", k: "li", t: "Lists", w: 23, last: 1 },
];
const LIB = [
  { g: "t", k: "fav", t: "Favorites", w: 43, hl: 1, first: 1 },
  { g: "t", k: "fav", t: "Most Recently Used", w: 95 },
  { g: "-", k: "comp", t: "Maxwell3D Compon", w: 93, last: 1 },
  { g: " +", k: "fold2", t: "Human Body Ex", w: 74 },
  { g: " +", k: "fold2", t: "Qi Wireless Pow", w: 74, last: 1 },
];

const FolderTab = ({ t, w, c }) => (
  <div className={"-mt-[2px] flex h-[19px] items-center border-b-2 border-r-2 border-[#6e6e6e] bg-[#f0f0f0] pl-[6px] pt-px font-['Liberation_Sans'] text-[12px] " + c}>
    <T w={w}>{t}</T>
  </div>
);

function LeftPanels() {
  return (
    <div className="flex w-[150px] shrink-0 flex-col overflow-hidden bg-[#f0f0f0]">
      <PanelHead t="Project Manager" w={84} />
      <div className="h-[398px] shrink-0 overflow-hidden bg-white text-[11.500px] text-[#0c1020]">
        <div className="-ml-[10px] w-[260px]">
          {PROJECT.map((r, i) => <TreeRow key={i} {...r} />)}
        </div>
      </div>
      <HScroll pre="ml-[5px] w-[6px]" thumb="ml-[18px] w-[65px]" />
      <div className={"h-[6px] shrink-0 " + SPLIT} />
      <PanelHead t="Properties" w={52} />
      <div className="mx-[4px] mt-[4px] flex h-[382px] shrink-0 flex-col border-2 border-b-[#6e6e6e] border-l-white border-r-[#6e6e6e] border-t-white p-[2px]">
        <div className="flex min-h-0 flex-1 flex-col border-l-2 border-t-2 border-[#6e6e6e] bg-white font-['Liberation_Sans'] text-[12px] text-[#101828]">
          <div className="mr-[3px] grid h-[19px] grid-cols-[63px_34px_1fr] border-b border-[#6e6e6e] bg-[#f0f0f0]">
            <div className="flex items-center justify-center border-r border-[#6e6e6e]"><T w={27}>Name</T></div>
            <div className="flex items-center justify-center border-r border-[#6e6e6e]"><T w={26}>Value</T></div>
            <div className="flex items-center justify-end pr-px"><T w={18}>Unit</T></div>
          </div>
          {[["Name", 27, "B", 7], ["Units", 23, "[mT...", 27]].map((r) => (
            <div key={r[0]} className="mr-[3px] grid h-[20px] grid-cols-[63px_34px_1fr] border-b border-[#b8b8b8]">
              <div className="flex items-center border-r border-[#b8b8b8] pl-[2px]"><T w={r[1]}>{r[0]}</T></div>
              <div className="flex items-center border-r border-[#b8b8b8] pl-[2px]"><T w={r[3]}>{r[2]}</T></div>
              <div />
            </div>
          ))}
        </div>
        <HScroll pre="ml-[7px] w-[6px]" thumb="ml-[6px] w-[54px]" c="mr-[2px]" />
      </div>
      <FolderTab t="FieldsQuantityFolder" w={95} c="ml-[5px] w-[110px]" />
    </div>
  );
}

function ModelTree() {
  return (
    <div className="flex w-[144px] shrink-0 flex-col overflow-hidden border-l-2 border-t-2 border-[#6e6e6e] bg-white">
      <div className="min-h-0 flex-1 overflow-hidden text-[12px] text-[#0c1020]">
        <div className="-ml-[2px] w-[300px]">
          {MODEL.map((r, i) => <TreeRow key={i} {...r} />)}
        </div>
      </div>
      <HScroll pre="ml-[4px] w-[6px]" thumb="ml-[6px] w-[80px]" c="mb-[2px]" />
    </div>
  );
}

function Library() {
  return (
    <div className="flex min-w-0 flex-1 flex-col overflow-hidden bg-[#f0f0f0] pl-px">
      <PanelHead t="Component Librar..." w={102} />
      <div className="ml-[5px] mr-[4px] mt-[4px] flex h-[825px] shrink-0 flex-col border-2 border-b-[#6e6e6e] border-l-white border-r-[#6e6e6e] border-t-[#9a9a9a] pb-[2px] pr-[3px]">
        <div className="min-h-0 flex-1 overflow-hidden bg-white pt-[2px] font-['Liberation_Sans'] text-[12px] text-[#0c1020]">
          <div className="w-[260px]">
            {LIB.map((r, i) => <TreeRow key={i} {...r} h="h-[16px]" />)}
          </div>
        </div>
        <HScroll pre="ml-[6px] w-[6px]" thumb="ml-[6px] w-[58px]" />
      </div>
      <FolderTab t="Components" w={59} c="ml-[5px] w-[73px]" />
    </div>
  );
}

/* ---------- 3D view ---------- */
const PITCH = 29;
const TURNS = Array.from({ length: 21 }, (_, i) => i);
const LEFT_RINGS = [
  [715, 11, 13.5, 9.5, 11], [738, 10, 14.3, 8, 9], [767.5, 8.2, 15, 7, 8.3],
  [802, 6.7, 16, 5.200, 7.2], [842, 5, 16.300, 3.8, 6.8], [885.500, 3.3, 16.500, 1.800, 6.2],
];
const RIGHT_RINGS = [
  [1021.700, 3.3, 17, 1.800, 6], [1064.600, 5, 16.500, 3.800, 6.800], [1104.400, 6.8, 15.6, 5.400, 7.4],
  [1139.600, 8.2, 14.800, 7, 8.300], [1168.800, 9.700, 14, 8, 9.3], [1192, 11, 13.400, 9.500, 11],
];
const WIRE = "#43593f";

const topColours = (i) =>
  i < 1 ? ["#00f0a0"] : i < 6 ? ["#10f050", "#12f845", "#0cf060"] : i < 10 ? ["#00e6d0", "#12f060", "#00f098"] : i < 15 ? ["#00c8f0", "#00e8c0", "#00f09a"] : i < 20 ? ["#0878f0", "#00c8f0", "#00eeb0"] : i < 25 ? ["#0a60f0", "#00c8f4", "#08d4f0"] : ["#1878f0", "#0a70f8", "#0068f0"];
const bottomColours = (i) =>
  i < 1 ? ["#ff6a00"] : i < 3 ? ["#ff5a00", "#f41010", "#ff0808"] : i < 5 ? ["#ffb400", "#ff7400", "#f81010"] : i < 12 ? ["#58e810", "#e8d808", "#f01818"] : i < 15 ? ["#28d060", "#f0a010", "#e83010"] : i < 21 ? ["#18c888", "#b8e808", "#f09010"] : ["#40f800", "#30f020", "#10e830"];

function arrow(x, y, dx, dy, wd) {
  const L = Math.hypot(dx, dy);
  const ux = dx / L, uy = dy / L;
  const h = Math.min(8, L * 0.38);
  const bx = x + dx - ux * h, by = y + dy - uy * h;
  return `M${x} ${y}L${bx - uy * wd} ${by + ux * wd}L${x + dx} ${y + dy}L${bx + uy * wd} ${by - ux * wd}Z`;
}
function Arrows() {
  const out = [];
  for (let i = 0; i < 29; i++) {
    const x = 690 + i * 18.800;
    const u = (14 - i) / 14;
    const s = Math.sign(u), a = Math.abs(u);
    const k = 0.45 + 0.55 * Math.sqrt(a);
    [[241, topColours(i)], [259, bottomColours(i)]].forEach(([y, cols], r) => {
      const edge = a > 0.99;
      const dx = edge ? 25 * s : s * 24 * Math.pow(a, 1.15);
      const dy = edge ? 7 : 26.5 - 14 * Math.pow(a, 2.200);
      if (edge) {
        out.push(<g key={r + "-" + i}><path d={`M${x} ${y}l${dx} ${dy}`} stroke={cols[0]} /><path d={arrow(x + dx * 0.7, y + dy * 0.7, dx * 0.3, dy * 0.3, 3)} fill={cols[0]} /></g>);
      } else {
        out.push(
          <g key={r + "-" + i} shapeRendering="crispEdges">
            <path d={arrow(x, y, dx * 0.95, dy, 3.400 * k)} fill={cols[0]} />
            <path d={arrow(x, y, dx, dy * 0.84, 3.200 * k)} fill={cols[1]} />
            <path d={arrow(x + s, y, dx * 1.020, dy * 0.64, 2.200 * k)} fill={cols[2]} />
            {i > 10 && i < 20 && <path d={`M${x + dx * 0.6} ${y + 13}v4`} stroke={r ? "#20b0c0" : "#0840e0"} strokeWidth="1.500" />}
          </g>
        );
      }
    });
  }
  return out;
}

function Scene() {
  return (
    <svg viewBox="308 145 1454 870" className="block h-[870px] w-[1454px]" fill="none">
      <defs>
        <linearGradient id="tube" x1="0" y1="0" x2="0" y2="1">
          <stop offset="0" stopColor="#eaf1eb" /><stop offset="0.220" stopColor="#e0e7e1" />
          <stop offset="0.270" stopColor="#cbd3cc" /><stop offset="0.720" stopColor="#c3cbc4" />
          <stop offset="0.770" stopColor="#dbdbdb" /><stop offset="1" stopColor="#dedede" />
        </linearGradient>
        <linearGradient id="plate" x1="0" y1="0" x2="1" y2="0">
          <stop offset="0" stopColor="#f0f8f2" /><stop offset="0.450" stopColor="#e6e9e7" /><stop offset="1" stopColor="#dadcdb" />
        </linearGradient>
        <linearGradient id="bar" x1="0" y1="0" x2="0" y2="1">
          <stop offset="0" stopColor="#e4e8e5" /><stop offset="0.650" stopColor="#e2e6e2" /><stop offset="1" stopColor="#dcdfdb" />
        </linearGradient>
        <linearGradient id="zc" x1="0" y1="0" x2="1" y2="0"><stop offset="0" stopColor="#4a7ce0" /><stop offset="0.550" stopColor="#6a9cf4" /><stop offset="0.600" stopColor="#3a58a8" /><stop offset="1" stopColor="#243a70" /></linearGradient>
        <linearGradient id="rc" x1="0" y1="0" x2="1" y2="0"><stop offset="0" stopColor="#f02020" /><stop offset="0.600" stopColor="#c01a1a" /><stop offset="1" stopColor="#601010" /></linearGradient>
        <radialGradient id="bb" cx="0.350" cy="0.300" r="0.800"><stop offset="0" stopColor="#7aa6ff" /><stop offset="0.500" stopColor="#3f6ae0" /><stop offset="1" stopColor="#22387c" /></radialGradient>
      </defs>
      <rect x="880" y="271" width="863" height="21" fill="url(#bar)" />
      <path d="M1743.500 270V293" stroke="#4a5c4a" />
      <rect x="308" y="880" width="650" height="21" fill="url(#bar)" />

      {/* far then near halves of every turn */}
      {TURNS.map((i) => (
        <g key={"b" + i} transform={`translate(699 ${304 + i * PITCH})`}>
          {i < 20 && <rect x="0" y="0" width="509" height="25" fill="url(#tube)" transform="skewY(-1.600)" />}
        </g>
      ))}
      {TURNS.map((i) => (
        <g key={"f" + i} transform={`translate(691 ${275.500 + i * PITCH})`}>
          <rect x="0" y="0" width="525" height="26" fill="url(#tube)" opacity="0.800" transform="skewY(1.600)" />
          <path d="M30 1L300 5V7L30 3ZM525 12.500L260 13V14.500L525 15Z" fill="#e6ece7" opacity="0.700" />
        </g>
      ))}
      <path d="M720 273L950 270L1000 273L960 279L740 280Z" fill="#e0e5e0" opacity="0.800" />
      {TURNS.map((i) => (
        <path key={"w" + i} d={`M706 ${303 + i * PITCH}h34l-6 -1.500h-28zM1204 ${289 + i * PITCH}h-36l8 -1.500h28z`} fill="#fff" />
      ))}

      {/* wire cross-sections */}
      <g stroke={WIRE} strokeWidth="1">
        {TURNS.map((i) => {
          const l = 288.500 + i * PITCH;
          const r = 303 + i * PITCH;
          return (
            <g key={i}>
              <ellipse cx="699" cy={l} rx="11" ry="12.800" fill="#e9f2ea" />
              <ellipse cx="691" cy={l} rx="11.500" ry="12" fill="#eff8f0" fillOpacity="0.850" strokeWidth="1.400" />
              <ellipse cx="699" cy={l} rx="10.500" ry="11.500" strokeWidth="0.900" />
              <ellipse cx="1208" cy={r} rx="11" ry="12.800" fill="#dcdfdc" />
              <ellipse cx="1215.700" cy={r} rx="11.800" ry="12" fill="#dedfde" fillOpacity="0.900" strokeWidth="1.400" />
              <ellipse cx="1208" cy={r} rx="10.500" ry="11.500" strokeWidth="0.900" />
              {LEFT_RINGS.map(([x, a, b, c, d]) => (
                <g key={x}><ellipse cx={x} cy={l} rx={a} ry={b} fill="#c9d2c9" fillOpacity="0.350" /><ellipse cx={x} cy={l + 0.5} rx={c} ry={d} strokeWidth="0.850" /></g>
              ))}
              {RIGHT_RINGS.map(([x, a, b, c, d]) => (
                <g key={x}><ellipse cx={x} cy={r} rx={a} ry={b} fill="#c9d2c9" fillOpacity="0.350" /><ellipse cx={x} cy={r} rx={c} ry={d} strokeWidth="0.850" /></g>
              ))}
            </g>
          );
        })}
        <path d="M930.500 270V887M976.500 285V901" strokeWidth="2.400" />
        <path d="M930.500 276V880M976.500 292V896" stroke="#a9b8a8" strokeWidth="0.900" strokeDasharray="3 5" />
      </g>

      {/* plate and field vectors */}
      <rect x="690" y="240.500" width="527" height="18" fill="url(#plate)" />
      <Arrows />
      <path d="M690 240.500H1217M690 258.500H1217" stroke="#4a5a48" strokeWidth="1.200" />
      <path d="M953.500 270V293M953.500 885V902" stroke="#26402a" strokeWidth="1.200" />

      {/* model axes */}
      <path d="M953.500 886V783" stroke="#3a63c8" strokeWidth="2" />
      <path d="M953.300 763L959.500 783H947Z" fill="url(#zc)" />
      <path d="M958 890.500H1062" stroke="#1a861a" strokeWidth="2" />
      <path d="M1080 890.300L1061 896V885Z" fill="#127012" />
      <circle cx="953.300" cy="890" r="6" fill="url(#rc)" />
      <g fontFamily="Liberation Sans" fontSize="23">
        <text x="951.500" y="739" fill="#4468cc">Z</text>
        <text x="951.500" y="889" fill="#f41414">X</text>
        <text x="1103" y="888.500" fill="#1c8a1c">Y</text>
      </g>

      {/* orientation triad */}
      <g>
        <path d="M389.500 908V890" stroke="#3c66e0" strokeWidth="2.500" />
        <path d="M389.500 880L393 894H386Z" fill="#3c66d8" />
        <circle cx="389.500" cy="918" r="6.500" fill="url(#bb)" /><circle cx="389.500" cy="948" r="6.500" fill="url(#bb)" />
        <circle cx="374.500" cy="934" r="6" fill="#10b818" /><circle cx="405" cy="934" r="6" fill="#0a5a10" />
        <rect x="375.500" y="919.500" width="28" height="28" fill="#fff" stroke="#c8d2e2" />
        <circle cx="404" cy="919" r="3.300" fill="#777" />
        <path d="M415 933.500H430" stroke="#0c8a14" strokeWidth="2.500" />
        <path d="M429 929.500L443 933.500L429 937.500Z" fill="#0c7a12" />
        <g fontFamily="Liberation Sans" fontWeight="bold" fontSize="13.500">
          <text x="381.500" y="879" fill="#3f68d8">Z</text>
          <text x="382" y="940" fill="#f01414">X</text>
          <text x="443.500" y="940" fill="#148a18">Y</text>
        </g>
      </g>

      {/* scale */}
      <rect x="726.500" y="977.500" width="617" height="9" fill="#fff" stroke="#000" />
      <rect x="1035" y="977" width="309" height="10" fill="#000" />
      <g fontFamily="Liberation Sans" fontSize="15" fill="#111" textAnchor="middle">
        <text x="726" y="1009">0</text><text x="1035" y="1009">35</text><text x="1364" y="1009">70 (mm)</text>
      </g>
    </svg>
  );
}

const LEG = [
  ["29.0", "bg-[#ff0000]"], ["27.7", "bg-[#ff7300]"], ["26.4", "bg-[#ffe600]"], ["25.1", "bg-[#a6ff00]"], ["23.8", "bg-[#3aff00]"],
  ["22.5", "bg-[#00ff37]"], ["21.2", "bg-[#00ffad]"], ["19.9", "bg-[#00e6ff]"], ["18.6", "bg-[#0073ff]"], ["17.3", "bg-[#0000ff]"], ["16.0", ""],
];
function Legend() {
  return (
    <div className="absolute left-[6px] top-[7px] flex h-[455px] w-[118px] flex-col border border-black bg-white font-['Liberation_Sans'] text-[18px] text-black">
      <div className="flex h-[68px] flex-col items-start border-b border-black pl-[6px] pt-[7px] text-[20px] font-bold leading-[27px]">
        <span>B</span>
        <T w={86}>[mTesla]</T>
      </div>
      <div className="flex h-[25px] items-center border-b border-black pl-[5px]"><T w={104}>Max: 28.965</T></div>
      <div className="flex flex-1 pl-[6px]">
        <div className="mt-[15px] w-[40px]">
          {LEG.slice(0, 10).map(([t, c]) => <div key={t} className={"h-[30.400px] " + c} />)}
        </div>
        <div className="ml-[15px]">
          {LEG.map(([t]) => <div key={t} className="flex h-[30.400px] items-center"><T w={37.5}>{t}</T></div>)}
        </div>
      </div>
      <div className="flex h-[25px] items-center border-t border-black pl-[5px]"><T w={99}>Min: 16.683</T></div>
    </div>
  );
}

function Viewport() {
  return (
    <div className="relative ml-[5px] w-[1456px] shrink-0 overflow-hidden border-l-2 border-t-2 border-[#6e6e6e] bg-white">
      <Scene />
      <Legend />
      <div className="absolute right-[7px] top-[6px] flex flex-col items-end font-['Liberation_Sans'] font-bold text-[#404040]">
        <T w={63} c="mr-[1px] text-[21px] leading-[28px]">Ansys</T>
        <T w={46} c="-mt-[4px] mr-[1px] text-[12.500px] leading-[13px]">2023 R2</T>
        <div className="mt-[1px] h-px w-[78px] bg-[#404040]" />
        <T w={58} c="mr-[1px] text-[12.500px] leading-[15px]">TEACHING</T>
      </div>
    </div>
  );
}

/* ---------- frame ---------- */
const EDT = ({ c }) => (
  <I c={c} v="0 0 16 16">
    <rect width="16" height="16" fill="#0a0a08" />
    <path d="M5 1Q-0.500 5.500 5 10.500M6 3Q2.500 5.500 6 9M11 1Q16.500 5.500 11 10.500M10 3Q13.500 5.500 10 9" stroke="#d9a226" strokeWidth="1" />
    <path d="M7 4.300Q5.500 5.800 7 7.500M9 4.300Q10.500 5.800 9 7.500" stroke="#b98618" strokeWidth="0.900" />
  </I>
);

const MENU = [["File", 18, "w-[32px]"], ["Edit", 20, "w-[34px]"], ["View", 25, "w-[39px]"], ["Project", 37, "w-[51px]"], ["Draw", 27, "w-[41px]"], ["Modeler", 44, "w-[58px]"], ["Maxwell 3D", 61, "w-[75px]"], ["Tools", 27, "w-[41px]"], ["Window", 44, "w-[58px]"], ["Help", 25, ""]];

function TitleBars() {
  return (
    <div className="h-[42px] shrink-0 bg-white text-[12px] text-black">
      <div className="flex h-[23px] items-center pl-[2px]">
        <I c="h-[16px] w-[16px]">
          <rect width="16" height="16" fill="#15120a" />
          <path d="M6.500 2Q2 8 6.500 14M4.500 2Q0 8 4.500 14M6.800 5Q4 8 6.800 11M9.500 2Q14 8 9.500 14M11.500 2Q16 8 11.500 14M9.200 5Q12 8 9.200 11" stroke="#c98f22" strokeWidth="1" />
        </I>
        <T w={726} c="ml-[6px]">Ansys Electronics Desktop 2023 R2 - helical_coil - Maxwell3DDesign1 - 3D Modeler - SOLVED - [helical_coil - Maxwell3DDesign1 - Modeler]</T>
        <div className="ml-auto flex items-center gap-[35px] pb-[2px] pr-[20px]">
          <I c="h-[11px] w-[11px]" v="0 0 11 11"><path d="M0 5.500H10" stroke="#000" /></I>
          <I c="h-[11px] w-[11px]" v="0 0 11 11"><path d="M0.500 2.500H7.500V10.500H0.500ZM2.500 2.500V0.500H9.500V8.500H7.500" stroke="#000" /></I>
          <I c="h-[11px] w-[11px]" v="0 0 11 11"><path d="M0.500 0.500L10.500 10.500M10.500 0.500L0.500 10.500" stroke="#000" strokeWidth="1.100" /></I>
        </div>
      </div>
      <div className="flex h-[19px] items-center pl-[7px]">
        <I c="mr-[8px] h-[13px] w-[15px]" v="0 0 15 13"><rect x="0.500" y="0.500" width="14" height="12" fill="#f2f4f8" stroke="#b4b8c0" /><rect x="2" y="2" width="7" height="9" fill="#2f7f8a" /><rect x="10" y="2" width="3" height="9" fill="#cdd8ea" /></I>
        {MENU.map(([t, w, c]) => <span key={t} className={"shrink-0 " + c}><T w={w}>{t}</T></span>)}
        <div className="ml-auto flex gap-px pr-px pt-px">
          {["M1 8H6", "M3 3.500V1H9V6H6.500M1 4H6.500V9H1ZM1 5H6", "M2 1.500L8 8.500M8 1.500L2 8.500"].map((d, i) => (
            <span key={d} className="flex h-[18px] w-[18px] items-center justify-center border border-[#dcdce4]">
              <I c="h-[10px] w-[10px]" v="0 0 10 10"><path d={d} stroke="#62728c" strokeWidth={i === 1 ? 1.200 : 2} /></I>
            </span>
          ))}
        </div>
      </div>
    </div>
  );
}

const TABS = [["Desktop", 43, "w-[72px]"], ["View", 25, "w-[39px]"], ["Draw", 27, ""], ["Model", 33, "w-[63px]"], ["Simulation", 54, "w-[83px]"], ["Results", 37, "w-[66px]"], ["Automation", 61, "w-[91px]"], ["Ansys Minerva", 73, "w-[104px]"], ["Learning and Support", 113, "w-[140px]"]];

function TabStrip() {
  return (
    <div className="flex h-[23px] shrink-0 bg-[#f0f0f0] pl-[16px] text-[11.500px] text-[#3c3f45]">
      {TABS.map(([t, w, c]) =>
        t === "Draw" ? (
          <div key={t} className="-mt-px mr-[15px] flex h-[21px] w-[54px] items-center justify-center border border-t-0 border-[#c9c9dc] bg-[#f2f2f5] text-[#1663a8]"><T w={w}>{t}</T></div>
        ) : (
          <div key={t} className={"flex h-[20px] shrink-0 items-center " + c}><T w={w}>{t}</T></div>
        )
      )}
      <div className="ml-auto flex h-[20px] items-center gap-[9px] pr-[3px]">
        <I c="h-[14px] w-[14px]" v="0 0 16 16"><circle cx="8" cy="8" r="7.700" fill="#2a66b0" /><path d="M5.500 6Q5.700 3.600 8 3.600T10.500 5.800Q10.500 7 9 7.800T8 10M8 11.500V13" stroke="#fff" strokeWidth="1.700" /></I>
        <I><rect width="16" height="16" rx="2" fill="#f6c21c" /><path d="M1 15.500L6 0.500H9L4.500 15.500ZM8 4L9.500 0.500L15 15.500H11.500Z" fill="#111" /></I>
      </div>
    </div>
  );
}

function StatusBar() {
  return (
    <div className="flex h-[23px] shrink-0 items-center bg-[#cdd4dd] pl-[4px] pr-px pt-[2px] text-[11.500px] text-[#111]">
      <T w={31}>Ready</T>
      <div className="ml-auto flex h-[19px] w-[120px] items-center border border-[#a9abb0] bg-[#e2e2e4] pl-[5px] font-['Liberation_Sans'] text-[12px]">
        <I c="h-[12px] w-[12px]"><path d="M8 1L15.500 15H0.500Z" fill="#f4e016" stroke="#b89c10" /><path d="M8 5V10M8 11.500V13.500" stroke="#111" strokeWidth="1.800" /></I>
        <T w={87} c="ml-[6px]">Show 6 Messages</T>
      </div>
      <div className="ml-[4px] flex h-[19px] w-[104px] items-center border border-[#a9abb0] bg-[#e2e2e4] pl-[5px] font-['Liberation_Sans'] text-[12px]">
        <I c="h-[5px] w-[11px]" v="0 0 11 5"><rect width="11" height="5" fill="#c8c8c8" /><path d="M0 0.500H11M0.500 0V5" stroke="#777" /><rect x="1" y="1" width="5" height="3" fill="#10e018" /></I>
        <T w={71} c="ml-[7px]">Show Progress</T>
      </div>
    </div>
  );
}

function Taskbar() {
  return (
    <div className="flex h-[40px] shrink-0 bg-gradient-to-r from-[#21363f] via-[#1e303f] to-[#1a2843] text-white">
      <div className="flex w-[48px] items-center justify-center">
        <I><path d="M0 2.300L6.800 1.300V7.600H0ZM7.600 1.200L16 0V7.600H7.600ZM0 8.400H6.800V14.700L0 13.700ZM7.600 8.400H16V16L7.600 14.800Z" fill="#fff" /></I>
      </div>
      <div className="flex h-[40px] w-[288px] items-center border border-[#c4c4c4] bg-[#f2f2f2] pl-[11px]">
        <I c="h-[17px] w-[17px]" v="0 0 17 17"><circle cx="10.500" cy="6.500" r="5.300" stroke="#222" strokeWidth="1.300" /><path d="M6.800 10.500L1 16.300" stroke="#222" strokeWidth="1.400" /></I>
        <T w={128} c="ml-[11px] text-[15px] text-[#3a3a3a]">Type here to search</T>
      </div>
      <div className="flex w-[48px] items-center justify-center">
        <I c="h-[16px] w-[17px]" v="0 0 17 16"><path d="M0.500 0V3H11.500V0M0.500 16V13H11.500V16M0.500 5.500H11.500V10.500H0.500ZM15 0V3M15 9V16" stroke="#e8ecee" strokeWidth="1.200" /><rect x="13.500" y="5" width="3" height="3" fill="#fff" /></I>
      </div>
      <div className="ml-[3px] flex w-[48px] items-center justify-center">
        <I c="h-[24px] w-[24px]" v="0 0 24 24">
          <circle cx="12" cy="12" r="11.700" fill="#1573cc" />
          <path d="M1 9Q4 0 13 0.300Q23 1 23.800 10Q23.500 16 17 16Q13 15.500 15 12.500Q15 7 8 7.500Q3 8 0.500 13Z" fill="#32b8dc" />
          <path d="M13 0.300Q23 1 23.800 10Q23.500 16 17 16Q13 15.500 15 12.500Q16 9 12 6Z" fill="#52d66c" />
          <path d="M8.500 10.500Q6 18 13 21.500Q18 22.500 21.500 19Q18 24.500 11 23.700Q3 22 5 14Q6 11 8.500 10.500Z" fill="#0c4a94" />
        </I>
      </div>
      <div className="flex w-[48px] flex-col items-center justify-end">
        <I c="mb-[8px] h-[20px] w-[23px]" v="0 0 23 20"><path d="M0.500 1H9L11 3.500H22V19H0.500Z" fill="#d99a1e" /><path d="M0.500 5H22.500V19H0.500Z" fill="#fbd366" /><path d="M4 19V11H19V19H15V15H8V19Z" fill="#3f90d8" /></I>
        <div className="h-[2px] w-[40px] bg-[#78b6ec]" />
      </div>
      <div className="flex w-[49px] items-center justify-center">
        <I c="h-[23px] w-[23px]" v="0 0 23 23"><path d="M6 5V1H17V5" stroke="#26a7e4" strokeWidth="1.800" /><rect x="0.500" y="4" width="22" height="18.500" rx="2" fill="#f5f5f5" /><path d="M7 9H11V13H7Z" fill="#f05024" /><path d="M12 9H16V13H12Z" fill="#80bb0a" /><path d="M7 14H11V18H7Z" fill="#08a4ee" /><path d="M12 14H16V18H12Z" fill="#fdb80c" /></I>
      </div>
      <div className="ml-[2px] flex w-[48px] flex-col items-center justify-end bg-[#506369]">
        <div className="relative mb-[6px] h-[24px] w-[24px]">
          <EDT c="h-[24px] w-[24px]" />
          <span className="absolute bottom-0 left-[3px] font-['Liberation_Sans'] text-[8.500px] font-bold leading-[8px]">EDT</span>
        </div>
        <div className="h-[2px] w-full bg-[#78b6ec]" />
      </div>
      <div className="ml-auto flex items-center">
        <I c="h-[16px] w-[24px]" v="0 0 24 16"><path d="M1 1H20V15H3Q1 15 1 13ZM20 4H23V13Q23 15 21 15H18" stroke="#fff" strokeWidth="1.400" /><rect x="4" y="7" width="6" height="5" stroke="#fff" strokeWidth="1.300" /><path d="M3.500 4.500H17.500M12 7.500H17.500M12 11.500H17.500" stroke="#fff" strokeWidth="1.300" /></I>
        <I c="ml-[26px] h-[7px] w-[12px]" v="0 0 12 7"><path d="M0.500 6.500L6 1L11.500 6.500" stroke="#fff" strokeWidth="1.200" /></I>
        <I c="ml-[10px] h-[14px] w-[16px]" v="0 0 16 14"><path d="M5 1.500H15.500V10H3.500V6M9 10V13M5 13.400H13M0.500 0.500H4.500V4.500H0.500ZM2.500 4.500V8" stroke="#fff" /></I>
        <I c="ml-[8px] h-[14px] w-[17px]" v="0 0 17 14"><path d="M0.500 5H3L6.500 1.500V12.500L3 9H0.500ZM9 4.500Q10.500 7 9 9.500M11.500 2.500Q14 7 11.500 11.500M14 1Q17.500 7 14 13" stroke="#fff" /></I>
        <div className="ml-[8px] flex w-[60px] flex-col items-center text-[11.500px] leading-[18px]">
          <T w={28}>01:23</T>
          <T w={58}>2024/10/24</T>
        </div>
        <I c="ml-[16px] h-[17px] w-[17px]" v="0 0 17 17"><path d="M0.500 1H16.500V12.500H10.500L8.500 15.500L6 12.500H0.500Z" stroke="#fff" strokeWidth="1.100" /></I>
        <div className="ml-[20px] h-[40px] w-px bg-[#66738a]" />
        <div className="w-[4px]" />
      </div>
    </div>
  );
}

export default function App() {
  return (
    <div className="flex h-[1080px] w-[1920px] flex-col overflow-hidden bg-[#f0f0f0] font-['Noto_Sans',sans-serif] leading-[16px]">
      <TitleBars />
      <Ribbon />
      <TabStrip />
      <div className="flex h-[874px] shrink-0">
        <LeftPanels />
        <SplitV />
        <div className="w-px bg-[#f0f0f0]" />
        <ModelTree />
        <Viewport />
        <div className="w-[2px] bg-[#f0f0f0]" />
        <SplitV c="w-[5px]" />
        <Library />
      </div>
      <StatusBar />
      <Taskbar />
    </div>
  );
}
